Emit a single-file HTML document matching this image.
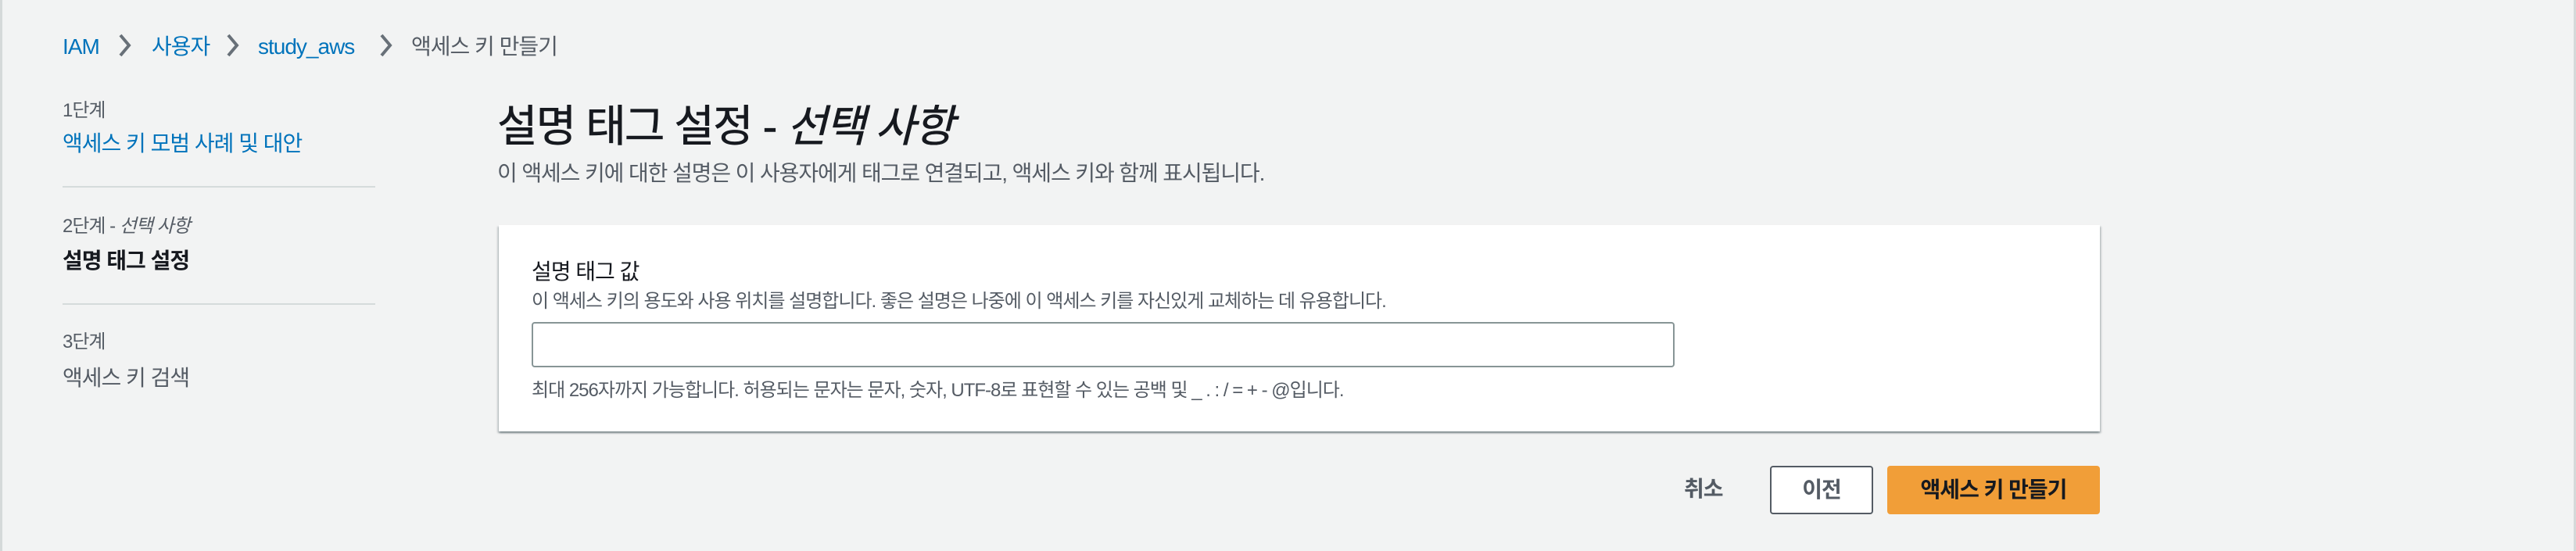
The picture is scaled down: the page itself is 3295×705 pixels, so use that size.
<!DOCTYPE html>
<html><head><meta charset="utf-8"><style>
html{zoom:2}
body{margin:0;width:1647.5px;height:352.5px;background:#f2f3f3;position:relative;overflow:hidden;font-family:"Liberation Sans","Noto Sans CJK KR",sans-serif;color:#16191f;letter-spacing:-0.5px}
.a{position:absolute;white-space:nowrap;line-height:1}
.bl{color:#0073bb}
.g{color:#545b64}
.hr{position:absolute;left:40px;width:200px;height:1px;background:#d5dbdb}
.chev{position:absolute;top:21px}
</style></head><body>
<div style="position:absolute;left:0;top:0;width:1.5px;height:100%;background:#d5d9d9"></div>
<div style="position:absolute;right:0;top:0;width:1.5px;height:100%;background:#d5d9d9"></div>

<div class="a bl" style="left:40px;top:23px;font-size:14px">IAM</div>
<svg class="chev" style="left:75px" width="10" height="16" viewBox="0 0 10 16"><path d="M2 1.5l5.5 6.5-5.5 6.5" fill="none" stroke="#687078" stroke-width="2"/></svg>
<div class="a bl" style="left:97px;top:23px;font-size:14px">사용자</div>
<svg class="chev" style="left:144px" width="10" height="16" viewBox="0 0 10 16"><path d="M2 1.5l5.5 6.5-5.5 6.5" fill="none" stroke="#687078" stroke-width="2"/></svg>
<div class="a bl" style="left:165px;top:23px;font-size:14px">study_aws</div>
<svg class="chev" style="left:242px" width="10" height="16" viewBox="0 0 10 16"><path d="M2 1.5l5.5 6.5-5.5 6.5" fill="none" stroke="#687078" stroke-width="2"/></svg>
<div class="a g" style="left:263px;top:23px;font-size:14px">액세스 키 만들기</div>

<div class="a g" style="left:40px;top:65px;font-size:12px">1단계</div>
<div class="a bl" style="left:40px;top:85px;font-size:14px">액세스 키 모범 사례 및 대안</div>
<div class="hr" style="top:119px"></div>
<div class="a g" style="left:40px;top:139px;font-size:12px">2단계 - <i>선택 사항</i></div>
<div class="a" style="left:40px;top:160px;font-size:14px;font-weight:bold">설명 태그 설정</div>
<div class="hr" style="top:194px"></div>
<div class="a g" style="left:40px;top:213px;font-size:12px">3단계</div>
<div class="a g" style="left:40px;top:235px;font-size:14px">액세스 키 검색</div>

<div class="a" style="left:318px;top:67px;font-size:28px;letter-spacing:-0.9px;-webkit-text-stroke:0.3px #16191f">설명 태그 설정 - <i>선택 사항</i></div>
<div class="a g" style="left:318px;top:104px;font-size:14px;letter-spacing:-0.55px">이 액세스 키에 대한 설명은 이 사용자에게 태그로 연결되고, 액세스 키와 함께 표시됩니다.</div>

<div style="position:absolute;left:319px;top:144px;width:1024px;height:132px;background:#fff;box-shadow:0 1px 1px 0 rgba(0,28,36,.3),1px 1px 1px 0 rgba(0,28,36,.15),-1px 1px 1px 0 rgba(0,28,36,.15)"></div>
<div class="a" style="left:340px;top:167px;font-size:14px">설명 태그 값</div>
<div class="a g" style="left:340px;top:187px;font-size:12px">이 액세스 키의 용도와 사용 위치를 설명합니다. 좋은 설명은 나중에 이 액세스 키를 자신있게 교체하는 데 유용합니다.</div>
<div style="position:absolute;left:340px;top:206px;width:731px;height:29px;box-sizing:border-box;border:1px solid #879596;border-radius:2px;background:#fff"></div>
<div class="a g" style="left:340px;top:244px;font-size:12px">최대 256자까지 가능합니다. 허용되는 문자는 문자, 숫자, UTF-8로 표현할 수 있는 공백 및 _ . : / = + - @입니다.</div>

<div class="a g" style="left:1077px;top:306px;font-size:14px;font-weight:bold">취소</div>
<div style="position:absolute;left:1132px;top:298px;width:66px;height:31px;box-sizing:border-box;border:1px solid #545b64;border-radius:2px;background:#fff;color:#545b64;font-size:14px;font-weight:bold;text-align:center;line-height:29px">이전</div>
<div style="position:absolute;left:1207px;top:298px;width:136px;height:31px;border-radius:2px;background:#f19e38;color:#16191f;font-size:14px;font-weight:bold;text-align:center;line-height:31px">액세스 키 만들기</div>
</body></html>
